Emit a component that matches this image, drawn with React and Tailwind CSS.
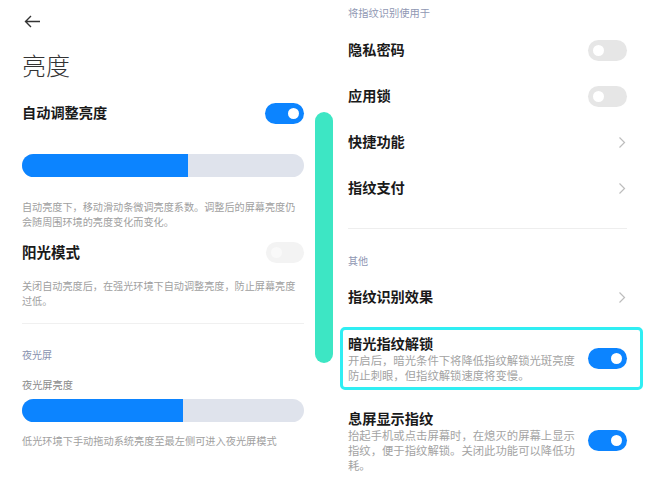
const FONT = { fontFamily: '"Noto Sans CJK SC", "Noto Sans", sans-serif' }

function Toggle({ on, dim }) {
  if (dim) {
    return (
      <div className="w-[38px] h-[21px] rounded-full bg-[#f3f3f3] flex items-center pl-[5px] shrink-0">
        <div className="w-[11px] h-[11px] rounded-full bg-[#f9f9f9]" />
      </div>
    )
  }
  return on ? (
    <div className="w-[39px] h-[21px] rounded-full bg-[#0c84ff] flex items-center justify-end pr-[5px] shrink-0">
      <div className="w-[11px] h-[11px] rounded-full bg-white" />
    </div>
  ) : (
    <div className="w-[39px] h-[21px] rounded-full bg-[#e6e6e6] flex items-center pl-[5px] shrink-0">
      <div className="w-[11px] h-[11px] rounded-full bg-white" />
    </div>
  )
}

function Chevron() {
  return (
    <svg width="8" height="13" viewBox="0 0 8 13" className="shrink-0 mr-[1px]">
      <path d="M1.5 1.5 L6.5 6.5 L1.5 11.5" fill="none" stroke="#bdbdbd" strokeWidth="1.2" />
    </svg>
  )
}

function Slider({ pct }) {
  return (
    <div className="h-[23px] rounded-full bg-[#dfe3ec] overflow-hidden">
      <div className="h-full bg-[#0c84ff]" style={{ width: pct }} />
    </div>
  )
}

function Row({ label, right }) {
  return (
    <div className="h-[46px] flex items-center justify-between pl-[8px] pr-[16px]">
      <span className="text-[14.2px] font-semibold text-[#1a1a1a]">{label}</span>
      {right}
    </div>
  )
}

export default function App() {
  return (
    <div className="w-[650px] h-[480px] bg-white flex overflow-hidden" style={FONT}>
      {/* left: 亮度 */}
      <div className="w-[315px] shrink-0 pl-[22px] pr-[11px]">
        <div className="h-[42px] flex items-center pl-[2px]">
          <svg width="17" height="13" viewBox="0 0 17 13">
            <path d="M16 6.5 H1.5 M7 1 L1.5 6.5 L7 12" fill="none" stroke="#333" strokeWidth="1.4" />
          </svg>
        </div>
        <div className="mt-[7px] text-[24px] leading-[32px] font-light text-[#333]">亮度</div>
        <div className="mt-[20px] h-[24px] flex items-center justify-between">
          <span className="text-[14.2px] font-semibold text-[#1a1a1a]">自动调整亮度</span>
          <Toggle on />
        </div>
        <div className="mt-[29px]">
          <Slider pct="58.7%" />
        </div>
        <p className="mt-[22px] text-[10.15px] leading-[15px] text-[#a0a0a0]">
          自动亮度下，移动滑动条微调亮度系数。调整后的屏幕亮度仍会随周围环境的亮度变化而变化。
        </p>
        <div className="mt-[11px] h-[24px] flex items-center justify-between">
          <span className="text-[14.5px] font-semibold text-[#1a1a1a]">阳光模式</span>
          <Toggle dim />
        </div>
        <p className="mt-[14px] text-[10.15px] leading-[15px] text-[#a0a0a0]">
          关闭自动亮度后，在强光环境下自动调整亮度，防止屏幕亮度过低。
        </p>
        <div className="mt-[15px] h-px bg-[#f0f0f0]" />
        <div className="mt-[23px] text-[10px] leading-[15px] text-[#8790ad]">夜光屏</div>
        <div className="mt-[15px] text-[10.2px] leading-[15px] text-[#8a8a8a]">夜光屏亮度</div>
        <div className="mt-[7px]">
          <Slider pct="57.2%" />
        </div>
        <p className="mt-[11px] text-[10.2px] leading-[15px] text-[#a0a0a0]">
          低光环境下手动拖动系统亮度至最左侧可进入夜光屏模式
        </p>
      </div>

      {/* scroll indicator */}
      <div className="w-[18px] h-[251px] mt-[112px] mr-[7px] rounded-full bg-[#3de6c4] shrink-0" />

      {/* right: 指纹 */}
      <div className="w-[303px] shrink-0">
        <div className="mt-[5px] pl-[8px] text-[10.25px] leading-[15px] text-[#8f97b3]">将指纹识别使用于</div>
        <div className="mt-[7px]">
          <Row label="隐私密码" right={<Toggle />} />
          <Row label="应用锁" right={<Toggle />} />
          <Row label="快捷功能" right={<Chevron />} />
          <Row label="指纹支付" right={<Chevron />} />
        </div>
        <div className="mt-[17px] ml-[8px] mr-[16px] h-px bg-[#eeeeee]" />
        <div className="mt-[24px] pl-[8px] text-[10px] leading-[15px] text-[#8f97b3]">其他</div>
        <div className="mt-[6px]">
          <Row label="指纹识别效果" right={<Chevron />} />
        </div>
        <div className="mt-[7px] border-[3px] border-[#30eef3] rounded-[5px] pl-[5px] pr-[13px] pt-[3px] pb-[4px] flex items-center justify-between">
          <div>
            <div className="text-[14.2px] leading-[20px] font-semibold text-[#1a1a1a]">暗光指纹解锁</div>
            <p className="w-[230px] text-[11.35px] leading-[15px] text-[#a3a3a3]">
              开启后，暗光条件下将降低指纹解锁光斑亮度防止刺眼，但指纹解锁速度将变慢。
            </p>
          </div>
          <Toggle on />
        </div>
        <div className="mt-[18px] pl-[8px] pr-[16px] flex items-center justify-between">
          <div>
            <div className="text-[14.2px] leading-[20px] font-semibold text-[#1a1a1a]">息屏显示指纹</div>
            <p className="w-[230px] text-[11.35px] leading-[15px] text-[#a3a3a3]">
              抬起手机或点击屏幕时，在熄灭的屏幕上显示指纹，便于指纹解锁。关闭此功能可以降低功耗。
            </p>
          </div>
          <Toggle on />
        </div>
      </div>
    </div>
  )
}
